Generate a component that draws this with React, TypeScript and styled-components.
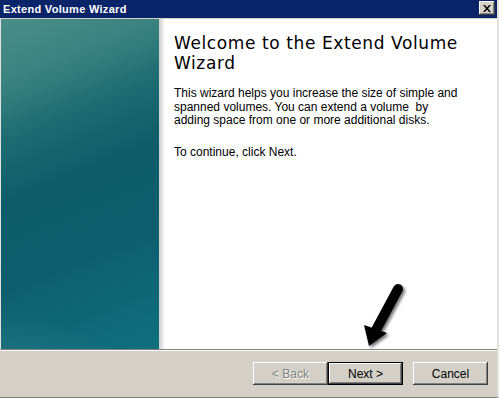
import React from 'react'
import styled, { createGlobalStyle } from 'styled-components'

const Global = createGlobalStyle`
  html, body {
    margin: 0;
    padding: 0;
    background: #d4d0c8;
  }
`

const Window = styled.div`
  position: relative;
  width: 499px;
  height: 398px;
  box-sizing: border-box;
  display: flex;
  flex-direction: column;
  background: #d4d0c8;
  border-right: 2px solid #e4e2dc;
  border-bottom: 1px solid #808080;
  overflow: hidden;
`

const TitleBar = styled.div`
  height: 18px;
  flex: none;
  display: flex;
  align-items: center;
  justify-content: space-between;
  padding: 0 2px 0 3px;
  background: #0a246a;
  color: #fff;
  font-family: 'Liberation Sans', Arial, sans-serif;
  font-weight: bold;
  font-size: 11px;
  letter-spacing: 0.3px;
  margin-bottom: 1px;
`

const CloseBtn = styled.div`
  width: 16px;
  height: 14px;
  box-sizing: border-box;
  background: #d4d0c8;
  box-shadow: inset -1px -1px #404040, inset 1px 1px #fff, inset -2px -2px #808080;
  display: flex;
  align-items: center;
  justify-content: center;
  margin-top: -2px;
`

const Body = styled.div`
  height: 330px;
  flex: none;
  display: flex;
  border-left: 1px solid #e4e2dc;
  border-bottom: 1px solid #808080;
  box-shadow: 0 1px 0 #fff;
  background: #fff;
`

const Banner = styled.div`
  width: 158px;
  flex: none;
  background:
    linear-gradient(20deg, rgba(255, 255, 255, 0.06) 0%, rgba(255, 255, 255, 0) 12%),
    linear-gradient(158deg, #4a8d88 0%, #3b8380 16%, #1c6b71 32%, #0d5b69 48%, #0e5f6e 70%, #10707e 100%);
`

const BannerShadow = styled.div`
  width: 5px;
  flex: none;
  background: linear-gradient(90deg, #cfcfcf, #f2f2f2);
`

const Content = styled.div`
  flex: 1;
  padding: 14px 36px 0 10px;
  font-family: 'Liberation Sans', Arial, sans-serif;
  color: #000;
`

const Heading = styled.h1`
  margin: 0 -30px 14px 0;
  font-family: 'DejaVu Sans', Verdana, sans-serif;
  font-weight: normal;
  font-size: 17px;
  letter-spacing: 0.6px;
  line-height: 20px;
`

const Para = styled.p<{ $gap?: number }>`
  margin: 0 0 ${p => p.$gap ?? 0}px;
  font-size: 12px;
  line-height: 13.5px;
`

const Footer = styled.div`
  flex: 1;
  display: flex;
  justify-content: flex-end;
  align-items: flex-start;
  padding: 12px 9px 0 0;
`

const Button = styled.button<{ $default?: boolean; $gap?: number }>`
  width: 75px;
  height: 23px;
  margin-left: ${p => p.$gap ?? 0}px;
  padding: 0;
  border: ${p => (p.$default ? '1px solid #000' : 'none')};
  background: #d4d0c8;
  box-shadow: inset -1px -1px #404040, inset 1px 1px #fff, inset -2px -2px #808080;
  font-family: 'Liberation Sans', Arial, sans-serif;
  font-size: 12px;
  color: #000;
  &:disabled {
    color: #808080;
    text-shadow: 1px 1px #fff;
  }
`

const Arrow = styled.svg`
  position: absolute;
  left: 350px;
  top: 275px;
  pointer-events: none;
`

export default function App() {
  return (
    <>
      <Global />
      <Window>
        <TitleBar>
          <span>Extend Volume Wizard</span>
          <CloseBtn>
            <svg width="8" height="7" viewBox="0 0 8 7">
              <path d="M0 0h2l2 2.5L6 0h2L5 3.5 8 7H6L4 4.5 2 7H0l3-3.5z" fill="#000" />
            </svg>
          </CloseBtn>
        </TitleBar>
        <Body>
          <Banner />
          <BannerShadow />
          <Content>
            <Heading>Welcome to the Extend Volume Wizard</Heading>
            <Para $gap={18}>
              This wizard helps you increase the size of simple and spanned volumes. You can extend a volume&nbsp; by
              adding space from one or more additional disks.
            </Para>
            <Para>To continue, click Next.</Para>
          </Content>
        </Body>
        <Footer>
          <Button disabled>&lt; Back</Button>
          <Button $default>Next &gt;</Button>
          <Button $gap={10}>Cancel</Button>
        </Footer>
        <Arrow width="60" height="80" viewBox="0 0 60 80">
          <defs>
            <filter id="sh" x="-50%" y="-50%" width="200%" height="200%">
              <feDropShadow dx="2" dy="2" stdDeviation="1.6" floodColor="#000" floodOpacity="0.55" />
            </filter>
          </defs>
          <g filter="url(#sh)">
            <line x1="48" y1="14" x2="26" y2="55" stroke="#000" strokeWidth="10" strokeLinecap="round" />
            <path d="M14 50 L19 71 L37 58 Z" fill="#000" />
          </g>
        </Arrow>
      </Window>
    </>
  )
}
